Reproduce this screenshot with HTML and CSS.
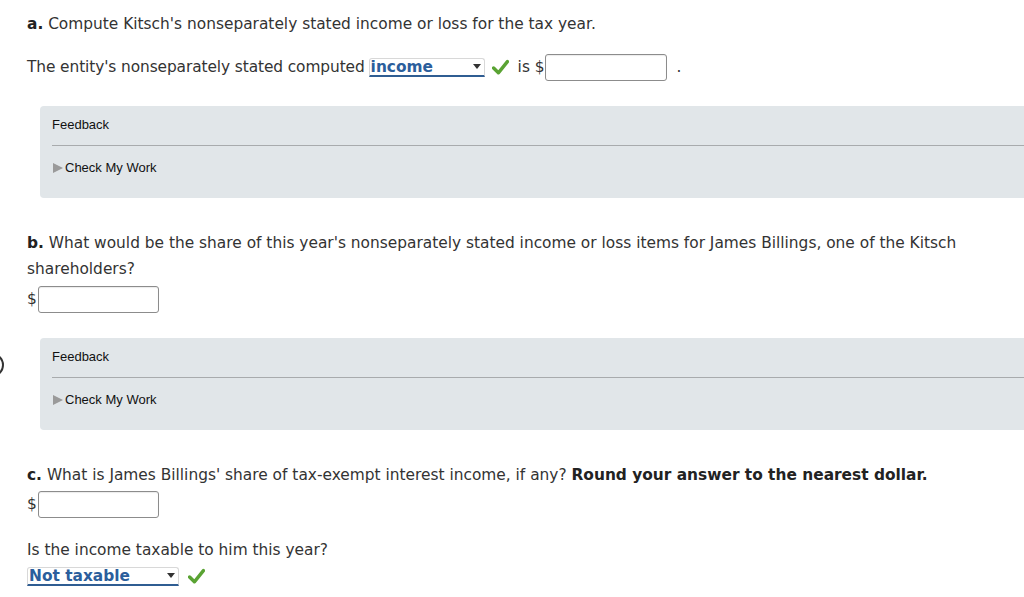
FILE: index.html
```html
<!DOCTYPE html>
<html>
<head>
<meta charset="utf-8">
<link rel="stylesheet" href="styles.css">
</head>
<body>
<div class="page">
  <p class="q q-a"><b>a.</b> Compute Kitsch's nonseparately stated income or loss for the tax year.</p>
  <div class="row row-entity">
    <span class="lead">The entity's nonseparately stated computed</span>
    <span class="select sel-income"><span class="sel-text">income</span><span class="arrow"></span></span>
    <svg class="check" viewBox="0 0 16 16" width="17" height="17"><path d="M1.5 8.5 L6 13 L14.5 2.5" fill="none" stroke="#5aa333" stroke-width="3.2" stroke-linecap="round" stroke-linejoin="round"/></svg>
    <span class="is">is $</span><span class="input in-a"></span><span class="dot">.</span>
  </div>

  <div class="feedback fb-1">
    <div class="fb-head">Feedback</div>
    <div class="fb-body"><span class="tri"></span>Check My Work</div>
  </div>

  <p class="q q-b"><b>b.</b> What would be the share of this year's nonseparately stated income or loss items for James Billings, one of the Kitsch<br>shareholders?</p>
  <div class="row row-dollar"><span>$</span><span class="input in-b"></span></div>

  <div class="feedback fb-2">
    <span class="edge"></span>
    <div class="fb-head">Feedback</div>
    <div class="fb-body"><span class="tri"></span>Check My Work</div>
  </div>

  <p class="q q-c"><b>c.</b> What is James Billings' share of tax-exempt interest income, if any? <strong>Round your answer to the nearest dollar.</strong></p>
  <div class="row row-dollar row-c"><span>$</span><span class="input in-b"></span></div>
  <p class="q q-taxable">Is the income taxable to him this year?</p>
  <div class="row row-taxable">
    <span class="select sel-tax"><span class="sel-text">Not taxable</span><span class="arrow"></span></span>
    <svg class="check" viewBox="0 0 16 16" width="17" height="17"><path d="M1.5 8.5 L6 13 L14.5 2.5" fill="none" stroke="#5aa333" stroke-width="3.2" stroke-linecap="round" stroke-linejoin="round"/></svg>
  </div>
</div>
</body>
</html>
```
FILE: styles.css
```css
html, body {
  margin: 0;
  padding: 0;
  overflow: hidden;
  background: #fff;
}
.page {
  font-family: "DejaVu Sans", Verdana, sans-serif;
  font-size: 15.4px;
  color: #333;
  padding: 11px 0 0 27px;
}
.q {
  margin: 0;
  line-height: 26px;
  white-space: nowrap;
}
.q b, .q strong { font-weight: bold; color: #222; }
.row {
  display: flex;
  align-items: center;
  height: 28px;
  line-height: 26px;
}
.row-entity { margin-top: 16px; }
.lead { letter-spacing: -0.1px; }
.select {
  display: inline-flex;
  align-items: center;
  justify-content: space-between;
  box-sizing: border-box;
  height: 19px;
  border: 1px solid #d8d8d8;
  border-bottom: 2px solid #2f5d92;
  border-radius: 3px 3px 0 0;
  color: #2b5e9c;
  font-weight: bold;
  line-height: 16px;
  padding: 0 3px 0 1px;
  background: #fff;
}
.sel-income { width: 116px; margin-left: 4px; }
.sel-tax { width: 152px; }
.arrow {
  width: 0;
  height: 0;
  border-left: 4px solid transparent;
  border-right: 4px solid transparent;
  border-top: 5px solid #333;
}
.check { margin-left: 7px; }
.is { margin-left: 9px; }
.input {
  display: inline-block;
  box-sizing: border-box;
  height: 27px;
  border: 1px solid #8c8c8c;
  border-radius: 3px;
  background: #fff;
  box-shadow: inset 0 1px 1px rgba(0,0,0,0.08);
}
.in-a { width: 122px; }
.in-b { width: 121px; }
.dot { margin-left: 10px; }

.feedback {
  position: relative;
  margin: 25px 0 0 13px;
  background: #e1e6e9;
  border-radius: 4px 0 0 4px;
  padding-left: 12px;
  font-family: "Liberation Sans", Arial, sans-serif;
  font-size: 13px;
  color: #111;
  height: 92px;
  box-sizing: border-box;
}
.fb-head {
  padding: 11px 0 12px;
  line-height: 16px;
  border-bottom: 1px solid #a8abad;
}
.fb-body {
  padding-top: 14px;
  line-height: 16px;
  display: flex;
  align-items: center;
}
.tri {
  width: 0;
  height: 0;
  border-top: 5px solid transparent;
  border-bottom: 5px solid transparent;
  border-left: 10px solid #9a9a9a;
  margin: 0 2px 0 1px;
}
.edge {
  position: absolute;
  left: -60px;
  top: 15px;
  width: 20px;
  height: 20px;
  border: 2px solid #333;
  border-radius: 50%;
}
.q-b { margin-top: 32px; }
.row-dollar { margin-top: 3px; }
.row-dollar .input { margin-left: 1px; }
.q-c { margin-top: 32px; }
.row-c { margin-top: 2px; }
.q-taxable { margin-top: 19px; }
.row-taxable { height: 26px; }
.row-taxable .check { margin-left: 9px; }
```
